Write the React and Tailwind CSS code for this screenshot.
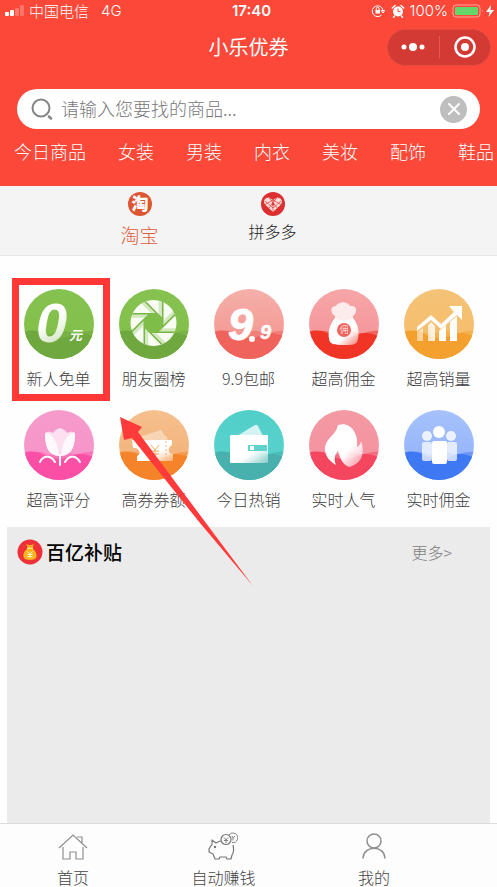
import React from 'react';

const ORBS = {
  lime: ['#86c250', '#80be48', '#6fa83f', '#79b345'],
  coral: ['#f5b0aa', '#f48f8a', '#f0625c', '#f27f79'],
  red: ['#f6a6a8', '#f58f92', '#f03527', '#f2625c'],
  amber: ['#f4c377', '#f6bb66', '#f3a02f', '#f5b04f'],
  pink: ['#f59bcb', '#f791c8', '#fb4fa5', '#f873b8'],
  orange: ['#f5c08f', '#f3ae71', '#f5832a', '#f49c52'],
  teal: ['#52cfc9', '#5bd2cc', '#48b0ad', '#4dbdb8'],
  rose: ['#f39aa4', '#f58f9c', '#f54660', '#f66c80'],
  blue: ['#a6c1fb', '#8fb1fa', '#3f78f3', '#6c97f7'],
};

function Orb({ tone, children }) {
  const [top, mid, front, back] = ORBS[tone];
  return (
    <svg className="size-[70px]" viewBox="0 0 70 70" aria-hidden="true">
      <defs>
        <linearGradient id={`bg-${tone}`} x1="0" y1="0" x2="0" y2="1">
          <stop offset="0" stopColor={top} />
          <stop offset="1" stopColor={mid} />
        </linearGradient>
        <linearGradient id="fade-down" x1="0" y1="0" x2="0.3" y2="1">
          <stop offset="0.55" stopColor="#fff" />
          <stop offset="1" stopColor="#fff" stopOpacity="0.65" />
        </linearGradient>
        <linearGradient id="fade-side" x1="0" y1="0" x2="1" y2="0">
          <stop offset="0" stopColor="#fff" stopOpacity="0.45" />
          <stop offset="0.6" stopColor="#fff" />
        </linearGradient>
        <linearGradient id="fade-corner" x1="0" y1="0" x2="1" y2="1">
          <stop offset="0.6" stopColor="#fff" />
          <stop offset="1" stopColor="#fff" stopOpacity="0.35" />
        </linearGradient>
        <clipPath id="orb-clip">
          <circle cx="35" cy="35" r="35" />
        </clipPath>
      </defs>
      <g clipPath="url(#orb-clip)">
        <rect width="70" height="70" fill={`url(#bg-${tone})`} />
        <path d="M0 46C8 42 14 40 22 44C30 47 38 39 46 43C54 47 60 40 70 42V70H0Z" fill={back} />
        <path d="M0 43C8 40 15 42 22 46C30 50 40 50 48 46C56 42 63 45 70 47V70H0Z" fill={front} />
      </g>
      {children}
    </svg>
  );
}

const CX = 34.5;
const CY = 34;
const blades = Array.from({ length: 8 }, (_, i) => {
  const a = (i * Math.PI) / 4 - Math.PI / 8;
  const b = a + Math.PI / 4;
  const p = [CX + 10 * Math.cos(a), CY + 10 * Math.sin(a)];
  const q = [CX + 10 * Math.cos(b), CY + 10 * Math.sin(b)];
  const len = Math.hypot(q[0] - p[0], q[1] - p[1]);
  const dir = [(p[0] - q[0]) / len, (p[1] - q[1]) / len];
  const end = [p[0] + dir[0] * 22, p[1] + dir[1] * 22];
  return { p, q, end, inset: [-dir[1] * -4, dir[0] * -4] };
});

const icons = {
  zero: (
    <Orb tone="lime">
      <text x="12" y="53" fontSize="56" fontWeight="700" fontStyle="italic" fontFamily="Liberation Sans, sans-serif" fill="url(#fade-down)">0</text>
      <text x="45" y="51" fontSize="13" fontWeight="700" fontStyle="italic" fontFamily="Noto Sans CJK SC, sans-serif" fill="#fff">元</text>
    </Orb>
  ),
  aperture: (
    <Orb tone="lime">
      <defs>
        <clipPath id="lens">
          <circle cx={CX} cy={CY} r="23" />
        </clipPath>
      </defs>
      <g clipPath="url(#lens)">
        <rect width="70" height="70" fill="#f8fcf3" />
        {blades.map(({ p, q, end, inset }, i) => (
          <g key={i}>
            <path d={`M${p}L${end}l${inset}L${p[0] + inset[0]} ${p[1] + inset[1]}Z`} fill="#9ccb70" fillOpacity="0.4" />
            <path d={`M${q}L${end}`} stroke="#76b443" strokeWidth="1.5" />
          </g>
        ))}
        <polygon points={blades.map(({ p }) => p.join(',')).join(' ')} fill="#7fbd49" />
      </g>
    </Orb>
  ),
  nine: (
    <Orb tone="coral">
      <g fontFamily="Liberation Sans, sans-serif" fontWeight="700" fontStyle="italic" fill="#fff" stroke="#fff" strokeLinejoin="round">
        <text x="14" y="51" fontSize="45" strokeWidth="1">9</text>
        <text x="46" y="50" fontSize="20" strokeWidth="0.5">9</text>
      </g>
      <circle cx="38" cy="50" r="3" fill="#fff" />
    </Orb>
  ),
  bag: (
    <Orb tone="red">
      <path d="M26 27C21 24 21 17 27 17C30 12 38 12 41 17C48 16 49 23 44 27V31H26Z" fill="#fff" fillOpacity="0.8" />
      <path d="M26 29C31 32 39 32 44 29C50 36 51 46 48 53C46 56 42 56 35 56C28 56 24 56 21 53C18 46 20 36 26 29Z" fill="url(#fade-corner)" />
      <circle cx="35" cy="41" r="7" fill="#ed625c" />
      <text x="35" y="44" textAnchor="middle" fontSize="9" fontFamily="Noto Sans CJK SC, sans-serif" fill="#fff">佣</text>
    </Orb>
  ),
  chart: (
    <Orb tone="amber">
      <path d="M13 43L19 39V52H13ZM24 36L27 33L31 37V52H24ZM35 42L42 36V52H35ZM46 33L53 27V52H46Z" fill="url(#fade-side)" />
      <path d="M13 38L27 26L37 35L50 23L45 17H58V31L53 26L37 40L27 31L13 42Z" fill="#fff" />
    </Orb>
  ),
  tulip: (
    <Orb tone="pink">
      <path d="M21 23C24 21 27 22 29 23C31 20 33 19 36 18C39 19 41 20 43 23C46 22 48 21 51 23C51 33 50 46 36 46C22 46 21 33 21 23Z" fill="#fff" fillOpacity="0.7" />
      <path d="M21 23C29 23 34 33 35 46C23 45 21 34 21 23ZM51 23C43 23 38 33 37 46C49 45 51 34 51 23Z" fill="#fff" fillOpacity="0.75" />
      <path d="M36 45V55M16 52C19 45 27 45 31 52M41 52C45 45 52 45 56 52" fill="none" stroke="#fff" strokeWidth="2" strokeLinecap="round" />
    </Orb>
  ),
  ticket: (
    <Orb tone="orange">
      <path d="M17 28L42 20L44 23Q45 26 48 27L49 34H20Z" fill="#fff" fillOpacity="0.4" />
      <path d="M13 30H53V35Q49 37 50 41Q50 44 54 44V51H18V46Q22 44 20 41Q18 37 14 38Z" fill="url(#fade-corner)" />
      <path d="M32 35L36 40L40 35M36 40V47M32 41H40M32 44H40" fill="none" stroke="#f3a860" strokeWidth="1" />
      <path d="M47 31V50" stroke="#f4b980" strokeWidth="1" strokeDasharray="2 2" />
    </Orb>
  ),
  wallet: (
    <Orb tone="teal">
      <path d="M23 26L41 15Q43 14 44 16L49 26Z" fill="#fff" fillOpacity="0.75" />
      <rect x="16" y="25" width="38" height="28" rx="1" fill="url(#fade-corner)" />
      <rect x="34" y="35" width="19" height="6" rx="1" fill="#5fd2cc" />
      <rect x="36" y="36" width="4" height="4" rx="1" fill="#fff" />
    </Orb>
  ),
  flame: (
    <Orb tone="rose">
      <path d="M29 15C40 11 50 22 48 37C50 36 52 34 52 31C55 39 56 53 40 57C33 54 31 48 29 41C25 45 25 50 27 55C18 50 15 42 16 37C18 27 27 25 29 15Z" fill="url(#fade-corner)" />
    </Orb>
  ),
  people: (
    <Orb tone="blue">
      <circle cx="23" cy="26" r="5" fill="#fff" fillOpacity="0.8" />
      <circle cx="47" cy="26" r="5" fill="#fff" fillOpacity="0.8" />
      <rect x="18" y="32" width="10" height="19" rx="2" fill="#fff" fillOpacity="0.72" />
      <rect x="43" y="32" width="10" height="19" rx="2" fill="#fff" fillOpacity="0.72" />
      <circle cx="35" cy="22" r="6" fill="#fff" />
      <rect x="28" y="31" width="15" height="23" rx="2" fill="#fff" />
    </Orb>
  ),
};

const shortcuts = [
  ['zero', '新人免单'],
  ['aperture', '朋友圈榜'],
  ['nine', '9.9包邮'],
  ['bag', '超高佣金'],
  ['chart', '超高销量'],
  ['tulip', '超高评分'],
  ['ticket', '高券券额'],
  ['wallet', '今日热销'],
  ['flame', '实时人气'],
  ['people', '实时佣金'],
];

const categories = ['今日商品', '女装', '男装', '内衣', '美妆', '配饰', '鞋品'];

function StatusBar() {
  return (
    <div className="grid h-[22px] grid-cols-[1fr_auto_1fr] items-center text-[15px]">
      <div className="flex items-center pl-[5px]">
        <svg className="h-3 w-5" viewBox="0 0 20 12" fill="#fff" aria-hidden="true">
          <rect x="0" y="7" width="4" height="4" rx="1" />
          <rect x="5" y="5" width="4" height="6" rx="1" />
          <rect x="10" y="3" width="4" height="8" rx="1" opacity="0.25" />
          <rect x="15" y="0" width="4" height="11" rx="1" opacity="0.25" />
        </svg>
        <span className="ml-1 leading-5">中国电信</span>
        <span className="ml-3 font-['Inter',sans-serif] font-light">4G</span>
      </div>
      <span className="pl-[6px] font-['Inter',sans-serif] font-semibold">17:40</span>
      <div className="flex items-center justify-end pr-[3px]">
        <svg className="size-[14px]" viewBox="0 0 14 14" fill="none" stroke="#fff" aria-hidden="true">
          <path d="M10.5 11A5.4 5.4 0 1 1 12 6.5M10.3 6.5H13.7L12 9Z" />
          <rect x="4.5" y="6" width="4.5" height="3.5" fill="#fff" stroke="none" />
          <path d="M5.3 6V4.8a1.4 1.4 0 0 1 2.8 0V6" />
        </svg>
        <svg className="ml-[6px] size-[14px]" viewBox="0 0 14 14" aria-hidden="true">
          <circle cx="7" cy="7.5" r="5" fill="#fff" />
          <path d="M1.3 4L4 1.5M12.7 4L10 1.5M3.5 12L2.5 13.2M10.5 12L11.5 13.2" stroke="#fff" strokeWidth="1.5" strokeLinecap="round" />
          <path d="M7 4.500V7.500H9.500" fill="none" stroke="#fb4839" />
        </svg>
        <span className="ml-[5px] font-['Inter',sans-serif] font-light">100%</span>
        <svg className="ml-1 h-[14px] w-8" viewBox="0 0 32 14" aria-hidden="true">
          <rect x="1" y="1" width="27" height="12" rx="3" fill="none" stroke="#fff" strokeOpacity="0.5" />
          <rect x="3" y="3" width="23" height="8" rx="1" fill="#62d66b" />
          <path d="M30 5Q31.500 7 30 9Z" fill="#fff" opacity="0.5" />
        </svg>
        <svg className="ml-[2px] h-3 w-2" viewBox="0 0 8 12" fill="#fff" aria-hidden="true">
          <path d="M5 0L0 7H3.500L2.500 12L8 5H4.500Z" />
        </svg>
      </div>
    </div>
  );
}

function Header() {
  return (
    <header className="bg-[#fb4839] pb-[13px] text-white">
      <StatusBar />
      <div className="grid h-[50px] grid-cols-[1fr_auto_1fr] items-center">
        <h1 className="col-start-2 text-xl font-normal">小乐优券</h1>
        <div className="mr-[6px] flex h-[37px] w-[104px] items-center justify-self-end rounded-full border border-[#e04a41] bg-[#d33a34]">
          <button type="button" aria-label="菜单" className="flex flex-1 items-center justify-center">
            <svg className="h-2 w-6" viewBox="0 0 24 8" fill="#fff" aria-hidden="true">
              <circle cx="3" cy="4" r="2.5" />
              <circle cx="12" cy="4" r="4" />
              <circle cx="21" cy="4" r="2.500" />
            </svg>
          </button>
          <span className="h-[22px] w-px bg-[#e15a53]" />
          <button type="button" aria-label="关闭小程序" className="flex flex-1 items-center justify-center">
            <svg className="size-[22px]" viewBox="0 0 22 22" aria-hidden="true">
              <circle cx="11" cy="11" r="9.500" fill="none" stroke="#fff" strokeWidth="2.500" />
              <circle cx="11" cy="11" r="4" fill="#fff" />
            </svg>
          </button>
        </div>
      </div>
      <form className="mx-[17px] mt-[17px] flex h-10 items-center rounded-full bg-white pr-[13px] pl-[14px]" onSubmit={(e) => e.preventDefault()}>
        <svg className="size-[22px] shrink-0" viewBox="0 0 22 22" fill="none" stroke="#858585" strokeWidth="2" strokeLinecap="round" aria-hidden="true">
          <circle cx="10" cy="10" r="8.500" />
          <path d="M18 18.500L20 20.500" strokeWidth="2.500" />
        </svg>
        <input
          type="text"
          aria-label="搜索商品"
          placeholder="请输入您要找的商品..."
          className="mb-[2px] ml-2 min-w-0 flex-1 bg-transparent text-lg text-gray-700 outline-none placeholder:text-[#77777b]"
        />
        <button type="reset" aria-label="清除" className="flex size-[27px] shrink-0 items-center justify-center rounded-full bg-[#bebebe]">
          <svg className="size-3" viewBox="0 0 12 12" stroke="#fff" strokeWidth="2" strokeLinecap="round" aria-hidden="true">
            <path d="M1 1L11 11M11 1L1 11" />
          </svg>
        </button>
      </form>
      <nav className="flex h-11 items-center gap-8 overflow-hidden pl-[14px] text-lg">
        {categories.map((c) => (
          <a key={c} href="#" className="shrink-0">{c}</a>
        ))}
      </nav>
    </header>
  );
}

function Platforms() {
  return (
    <nav className="flex h-[70px] border-b border-[#e6e6e6] bg-[#f4f4f4] pt-[6px] pl-[73px]">
      <a href="#" className="flex w-[133px] flex-col items-center text-[19px] text-[#df5b3c]">
        <svg className="size-6" viewBox="0 0 24 24" aria-hidden="true">
          <circle cx="12" cy="12" r="12" fill="#dc5631" />
          <text x="12" y="18" textAnchor="middle" fontSize="17" fontWeight="900" fontFamily="Noto Sans CJK SC, sans-serif" fill="#fff">淘</text>
        </svg>
        <span className="mt-[7px] leading-6">淘宝</span>
      </a>
      <a href="#" className="flex w-[133px] flex-col items-center text-base text-[#222]">
        <svg className="size-6" viewBox="0 0 24 24" aria-hidden="true">
          <circle cx="12" cy="12" r="12" fill="#dc2f30" />
          <path d="M12 20L4 12.500C1.500 9 4.500 5 8 5.500L12 8L16 5.500C19.500 5 22.500 9 20 12.500Z" fill="#fbdcd8" />
          <path d="M8 5.500L16 16M16 5.500L8 16M12 8V20M4 9L12 16L20 9M4 12.500L12 8L20 12.500" fill="none" stroke="#dc3a3a" strokeWidth="0.700" />
          <circle cx="12" cy="12" r="1.500" fill="#dc3a3a" />
        </svg>
        <span className="mt-[3px] leading-6">拼多多</span>
      </a>
    </nav>
  );
}

function Shortcuts() {
  return (
    <section className="relative grid grid-cols-5 gap-y-5 px-[11px] pt-[33px] pb-4">
      {shortcuts.map(([icon, label], i) => (
        <a key={label} href="#" className="relative flex flex-col items-center text-base leading-6 text-[#3d3d3d]">
          {icons[icon]}
          <span className="mt-[7px]">{label}</span>
          {i === 0 && <span className="absolute -top-[11px] -right-1 -bottom-[11px] left-px border-[7px] border-[#ff3737]" />}
        </a>
      ))}
      <svg className="absolute top-[161px] left-[120px] z-10 h-[169px] w-[133px]" viewBox="0 0 133 169" aria-hidden="true">
        <polygon points="0,0 22,10 18,15 133,169 80,106 12,21 4,23" fill="#ff3a3a" />
      </svg>
    </section>
  );
}

function Subsidy() {
  return (
    <section className="mx-[7px] flex-1 bg-[#ebebeb]">
      <div className="flex h-[50px] items-center pr-[38px] pl-[10px]">
        <svg className="size-[26px]" viewBox="0 0 26 26" aria-hidden="true">
          <circle cx="13" cy="13" r="12.500" fill="#ee3038" />
          <path d="M9 5Q13 7 17 5L15.500 9H10.500Z" fill="#f5a623" />
          <path d="M10.500 9.500H15.500C19 12 20.500 16 19 19C18 21.500 8 21.500 7 19C5.500 16 7 12 10.500 9.500Z" fill="#f9b51f" />
          <rect x="10" y="8.500" width="6" height="1.500" fill="#ffe16b" />
          <path d="M10.500 12.500L13 15L15.500 12.500M13 15V19M10.500 15.500H15.500M10.500 17.500H15.500" fill="none" stroke="#fff3c4" strokeWidth="1" />
        </svg>
        <h2 className="ml-[3px] text-[19px] font-medium text-black">百亿补贴</h2>
        <a href="#" className="ml-auto text-base text-[#7d7d7d]">更多&gt;</a>
      </div>
    </section>
  );
}

function TabBar() {
  return (
    <nav className="flex h-16 justify-between border-t border-[#dcdcdc] bg-[#fdfdfd] pt-[7px] pr-[107px] pl-[57px] text-base leading-5 text-[#444]">
      <a href="#" className="flex flex-col items-center">
        <svg className="h-8 w-[30px] shrink-0" viewBox="0 0 30 32" fill="none" stroke="#8f8f8f" strokeWidth="1.200" aria-hidden="true">
          <path d="M1 17L15 4L29 17M5 16V28H12V21H18V28H25V16M19 6H24V12" />
        </svg>
        <span className="mt-1">首页</span>
      </a>
      <a href="#" className="flex flex-col items-center">
        <svg className="h-8 w-[30px] shrink-0" viewBox="0 0 30 32" fill="none" stroke="#777" strokeWidth="1.200" strokeLinejoin="round" aria-hidden="true">
          <path d="M13 10C11 10 10 11 8 12L4 9V14C2 15 2 17 1 18V21L5 23L7 28H11L12 26H18L19 28H23L24 24C26 21 26 18 25 14" />
          <circle cx="7" cy="16" r="0.600" fill="#777" />
          <circle cx="18" cy="8.500" r="5" />
          <path d="M21 4A4.800 4.800 0 1 1 24 11.500M16 6.500L18 9L20 6.500M18 9V12M16 9.500H20M24 5L25 7L27 5M25 7V9.500" strokeWidth="0.900" />
        </svg>
        <span className="mt-1">自动赚钱</span>
      </a>
      <a href="#" className="flex flex-col items-center">
        <svg className="h-8 w-[30px] shrink-0" viewBox="0 0 30 32" fill="none" stroke="#8f8f8f" strokeWidth="1.500" aria-hidden="true">
          <circle cx="15" cy="10" r="7" />
          <path d="M4 27C5 14 25 14 26 27" strokeLinecap="round" />
        </svg>
        <span className="mt-1">我的</span>
      </a>
    </nav>
  );
}

export default function App() {
  return (
    <div className="flex min-h-screen flex-col overflow-hidden bg-[#fefefe] font-['Noto_Sans_CJK_SC',sans-serif] font-light">
      <Header />
      <Platforms />
      <Shortcuts />
      <Subsidy />
      <TabBar />
    </div>
  );
}
